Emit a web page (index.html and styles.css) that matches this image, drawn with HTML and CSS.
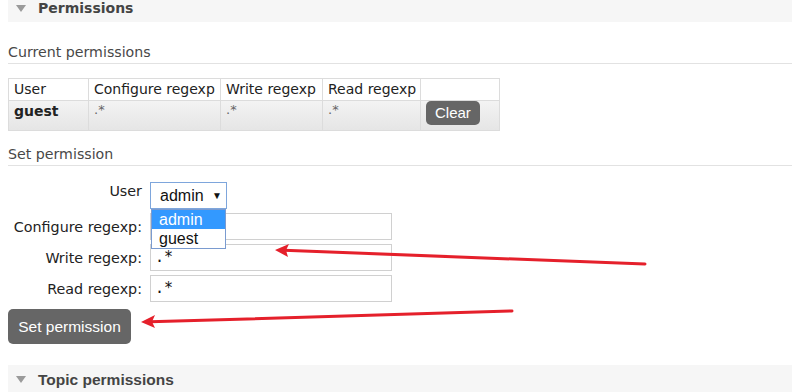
FILE: index.html
```html
<!DOCTYPE html>
<html>
<head>
<meta charset="utf-8">
<link rel="stylesheet" href="styles.css">
</head>
<body>
<div class="page">
  <div class="section-head"><span class="tri"></span><span class="head-title">Permissions</span></div>

  <h3 class="sub">Current permissions</h3>
  <table class="perms">
    <thead>
      <tr><th class="c1">User</th><th class="c2">Configure regexp</th><th class="c3">Write regexp</th><th class="c4">Read regexp</th><th class="c5"></th></tr>
    </thead>
    <tbody>
      <tr><td class="user">guest</td><td class="rx">.*</td><td class="rx">.*</td><td class="rx">.*</td><td class="act"><span class="btn-clear">Clear</span></td></tr>
    </tbody>
  </table>

  <h3 class="sub sub2">Set permission</h3>
  <div class="form">
    <div class="lbl lbl-user">User</div>
    <div class="field">
      <div class="select">admin <span class="caret">&#9660;</span></div>
      <div class="options">
        <div class="opt sel">admin</div>
        <div class="opt">guest</div>
      </div>
    </div>
    <div class="lbl">Configure regexp:</div>
    <div class="field"><div class="input"></div></div>
    <div class="lbl">Write regexp:</div>
    <div class="field"><div class="input">.*</div></div>
    <div class="lbl">Read regexp:</div>
    <div class="field"><div class="input">.*</div></div>
  </div>
  <div class="btn-set">Set permission</div>

  <div class="section-head topic"><span class="tri"></span><span class="head-title topic-title">Topic permissions</span></div>
</div>

<svg class="arrows" width="792" height="392" viewBox="0 0 792 392">
  <line x1="645" y1="264" x2="284" y2="250.3" stroke="#e5202b" stroke-width="3" stroke-linecap="round"/>
  <polygon points="275,250 289,244 286,250.3 288,257" fill="#e5202b"/>
  <line x1="512" y1="311" x2="150" y2="321.8" stroke="#e5202b" stroke-width="3" stroke-linecap="round"/>
  <polygon points="141,322 155,315 152,321.8 155,328" fill="#e5202b"/>
</svg>
</body>
</html>
```
FILE: styles.css
```css
html, body {
  margin: 0;
  padding: 0;
  background: #fff;
}
body {
  font-family: "DejaVu Sans", Verdana, sans-serif;
  color: #222;
  width: 792px;
  height: 392px;
  overflow: hidden;
  position: relative;
}
.page {
  padding-left: 8px;
}
.section-head {
  background: #f6f6f6;
  height: 22px;
  display: flex;
  align-items: flex-start;
}
.tri {
  width: 0;
  height: 0;
  border-left: 5px solid transparent;
  border-right: 5px solid transparent;
  border-top: 7px solid #9a9a9a;
  margin: 5px 0 0 8px;
}
.head-title {
  font-weight: bold;
  font-size: 14px;
  line-height: 16px;
  color: #444;
  margin-left: 12px;
}
.topic {
  margin-top: 21px;
  height: 27px;
  align-items: center;
}
.topic .tri {
  margin-top: 1px;
}
.topic-title {
  font-family: "Liberation Sans", Arial, sans-serif;
  font-size: 15.5px;
  margin-left: 12px;
  margin-top: 2px;
}
.sub {
  margin: 21px 0 0 0;
  font-size: 14.2px;
  font-weight: normal;
  color: #484848;
  line-height: 18px;
  padding-bottom: 2px;
  border-bottom: 1px solid #e2e2e2;
}
.sub2 {
  margin-top: 14px;
}
.perms {
  margin-top: 14px;
  border-collapse: collapse;
  border: 1px solid #dcdcdc;
  font-size: 14px;
  width: 492px;
}
.perms th, .perms td {
  border: 1px solid #dcdcdc;
  text-align: left;
  padding: 0 0 0 5px;
  vertical-align: top;
}
.perms th {
  font-weight: normal;
  height: 21px;
  line-height: 21px;
  color: #222;
}
.c1 { width: 74px; }
.c2 { width: 126px; }
.c3 { width: 96px; }
.c4 { width: 92px; }
.perms tbody tr {
  background: linear-gradient(#f3f3f3, #e5e5e5);
}
.perms td {
  height: 29px;
}
.user {
  font-weight: bold;
  line-height: 21px;
  color: #222;
}
.rx {
  color: #666;
  font-size: 13px;
  line-height: 18px;
}
.act {
  padding: 1px 0 0 4px;
}
.btn-clear {
  display: inline-block;
  background: #666;
  color: #fff;
  font-family: "Liberation Sans", Arial, sans-serif;
  font-size: 15px;
  line-height: 24px;
  padding: 0 9px;
  border-radius: 5px;
}
.form {
  margin-top: 16px;
  display: grid;
  grid-template-columns: 134px 242px;
  column-gap: 8px;
  row-gap: 4px;
  align-items: center;
}
.lbl {
  text-align: right;
  font-size: 14.3px;
  color: #222;
  line-height: 18px;
}
.lbl-user {
  align-self: start;
}
.field {
  position: relative;
}
.select {
  height: 25px;
  border: 1px solid #7ea6dc;
  background: #fff;
  font-family: "Liberation Sans", Arial, sans-serif;
  font-size: 16px;
  line-height: 25px;
  color: #111;
  padding-left: 9px;
  box-sizing: content-box;
  width: 66px;
}
.caret {
  font-size: 10px;
  margin-left: 4px;
  vertical-align: 2px;
}
.options {
  position: absolute;
  left: 1px;
  top: 27px;
  width: 73px;
  border: 1px solid #7a9bd0;
  background: #fff;
  z-index: 2;
  font-family: "Liberation Sans", Arial, sans-serif;
  font-size: 16px;
}
.opt {
  height: 19px;
  line-height: 19px;
  padding-left: 7px;
  color: #111;
}
.opt.sel {
  background: #3399ff;
  color: #fff;
}
.input {
  height: 27px;
  border: 1px solid #d0d0d0;
  box-sizing: border-box;
  font-family: "DejaVu Sans Mono", monospace;
  font-size: 15px;
  line-height: 25px;
  padding-left: 4px;
  color: #111;
}
.btn-set {
  margin-top: 7px;
  width: 123px;
  height: 35px;
  background: #666;
  border-radius: 5px;
  color: #fff;
  font-family: "Liberation Sans", Arial, sans-serif;
  font-size: 15.5px;
  line-height: 35px;
  text-align: center;
}
.arrows {
  position: absolute;
  left: 0;
  top: 0;
  pointer-events: none;
}
```
